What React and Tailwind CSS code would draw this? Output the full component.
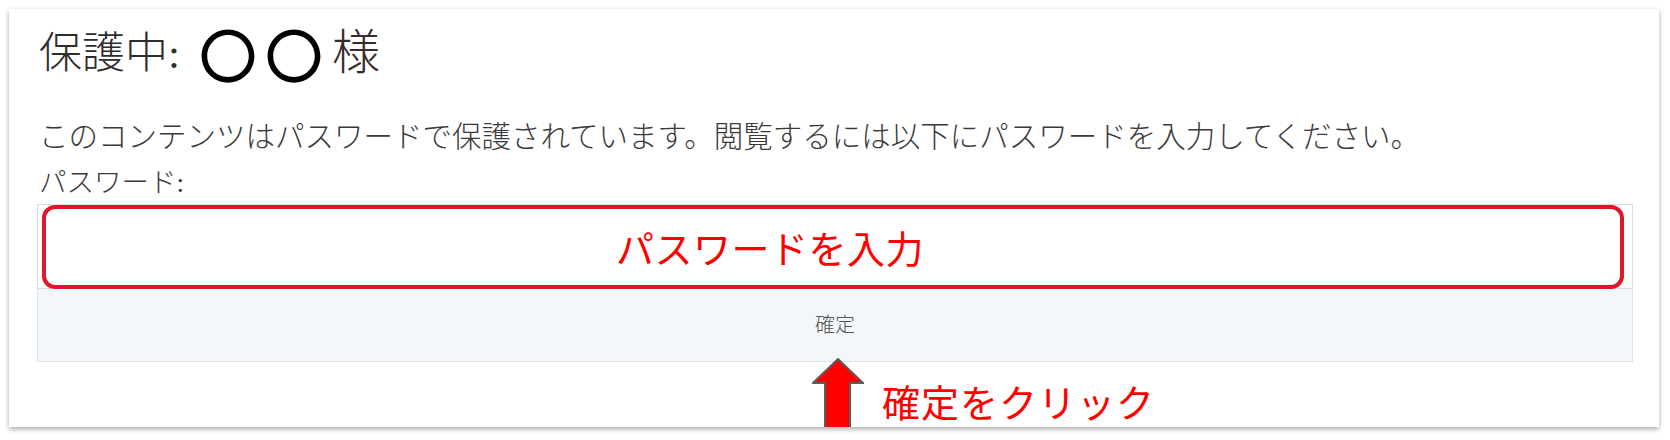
const serif = "font-['Liberation_Serif','Noto_Sans_CJK_JP',serif]";
const sans = "font-['Noto_Sans_CJK_JP','Noto_Sans',sans-serif]";

export default function App() {
  return (
    <div className="w-[1670px] h-[440px] bg-white pt-[9px] pl-[9px]">
      <div className="relative w-[1650px] h-[418px] bg-white overflow-hidden pl-[28px] pr-[26px] pt-[21px] shadow-[0_2px_5px_rgba(0,0,0,0.35)]">
        {/* title */}
        <h1 className={`flex items-center h-[46px] text-[#2d2d2d] font-light ${serif}`}>
          <span className="text-[43px] leading-none pl-[2px]">保護中:</span>
          <span className={`flex items-center gap-[8px] ml-[19px] text-[58px] leading-none font-medium text-black ${sans}`}>
            <span>〇</span>
            <span>〇</span>
          </span>
          <span className="text-[48px] leading-none text-[#3a2a2e] ml-[9px]">様</span>
        </h1>

        <p className={`mt-[41px] h-[40px] leading-[40px] text-[29.5px] text-[#3a3a3a] font-light pl-[2px] ${serif}`}>
          このコンテンツはパスワードで保護されています。閲覧するには以下にパスワードを入力してください。
        </p>

        <p className={`mt-[8px] h-[36px] leading-[36px] text-[27.5px] text-[#3a3a3a] font-light pl-[2px] ${serif}`}>
          パスワード:
        </p>

        {/* password input + annotation frame */}
        <div className="relative mt-[3px] h-[85px] bg-white border border-[#dcdcdc]">
          <div className="absolute left-[4px] top-0 right-[8px] bottom-[-1px] rounded-[13px] border-[4px] border-[#e0162b] flex items-center pl-[570px]">
            <span className={`text-[38px] leading-[40px] text-[#ff0000] tracking-[0.5px] ${sans}`}>
              パスワードを入力
            </span>
          </div>
        </div>

        <button
          className={`w-full h-[73px] bg-[#f4f7f9] border-x border-b border-[#e0e4e7] text-[20px] text-[#555] font-light ${serif}`}
        >
          確定
        </button>

        {/* arrow annotation */}
        <svg className="absolute left-[803px] top-[349px]" width="52" height="72" viewBox="0 0 52 72">
          <polygon
            points="26,1 51,25 38,25 38,80 13,80 13,25 1,25"
            fill="#ff0000"
            stroke="#5c5c5c"
            strokeWidth="2"
          />
        </svg>
        <span
          className={`absolute left-[873px] top-[373px] text-[38px] leading-[38px] text-[#ff0000] tracking-[1px] ${sans}`}
        >
          確定をクリック
        </span>
      </div>
    </div>
  );
}
